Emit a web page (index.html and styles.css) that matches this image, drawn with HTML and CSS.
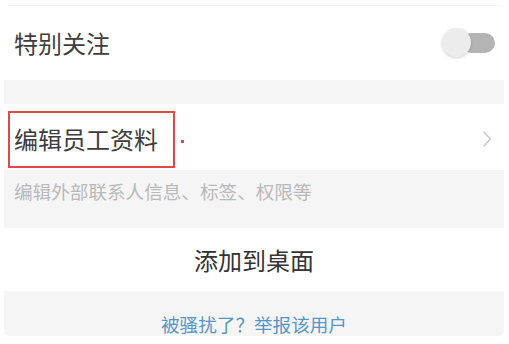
FILE: index.html
```html
<!DOCTYPE html>
<html lang="zh">
<head>
<meta charset="utf-8">
<link rel="stylesheet" href="styles.css">
</head>
<body>
<div class="page">
  <div class="topline"></div>
  <div class="row row-switch">
    <span class="label">特别关注</span>
    <span class="switch"><span class="knob"></span></span>
  </div>
  <div class="gap"></div>
  <div class="row row-edit">
    <span class="label">编辑员工资料</span>
    <svg class="chev" width="10" height="18" viewBox="0 0 10 18"><path d="M1.5 1.5 L8.5 9 L1.5 16.5" fill="none" stroke="#c8c8c8" stroke-width="1.6"/></svg>
    <span class="highlight"></span>
    <span class="dot"></span>
  </div>
  <div class="desc">编辑外部联系人信息、标签、权限等</div>
  <div class="row row-add">添加到桌面</div>
  <div class="report">被骚扰了？举报该用户</div>
</div>
</body>
</html>
```
FILE: styles.css
```css
html, body {
  margin: 0;
  padding: 0;
  background: #ffffff;
}
body {
  font-family: "Noto Sans CJK SC", "Noto Sans", sans-serif;
  width: 509px;
  height: 344px;
  overflow: hidden;
}
.page {
  margin: 0 5px 0 4px;
}
.topline {
  margin: 5px 4px 0 4px;
  height: 1px;
  background: #f1f1f1;
}
.row {
  display: flex;
  align-items: center;
  background: #ffffff;
  position: relative;
}
.label {
  font-size: 24px;
  color: #3d3d3d;
  line-height: 30px;
}
.row-switch {
  height: 74px;
  padding: 0 10px;
  justify-content: space-between;
}
.switch {
  position: relative;
  width: 52px;
  height: 20px;
  margin-right: -1px;
  display: flex;
  justify-content: flex-end;
}
.switch::before {
  content: "";
  width: 34px;
  height: 20px;
  border-radius: 10px;
  background: #b4b4b4;
}
.knob {
  position: absolute;
  left: -1px;
  top: -5px;
  width: 29px;
  height: 29px;
  border-radius: 50%;
  background: #ececec;
  box-shadow: 0 1px 3px rgba(0, 0, 0, 0.18);
}
.gap {
  height: 24px;
  background: #f5f5f5;
}
.row-edit {
  height: 66px;
  padding: 0 10px;
  justify-content: space-between;
}
.row-edit .label {
  margin-top: 4px;
}
.chev {
  margin-right: 2px;
  margin-top: 4px;
}
.highlight {
  position: absolute;
  left: 4px;
  top: 7px;
  width: 163px;
  height: 53px;
  border: 2px solid #e0474a;
}
.dot {
  position: absolute;
  left: 177px;
  top: 36px;
  width: 3px;
  height: 3px;
  background: #e0474a;
}
.desc {
  height: 48px;
  padding: 10px 10px 0;
  background: #f5f5f5;
  font-size: 18.6px;
  line-height: 22px;
  color: #b9b9b9;
}
.row-add {
  height: 63px;
  justify-content: center;
  font-size: 24px;
  color: #333333;
}
.report {
  height: 23px;
  padding-top: 22px;
  background: #f5f5f5;
  border-radius: 0 0 6px 6px;
  text-align: center;
  font-size: 18.6px;
  line-height: 22px;
  color: #5596c8;
}
```
